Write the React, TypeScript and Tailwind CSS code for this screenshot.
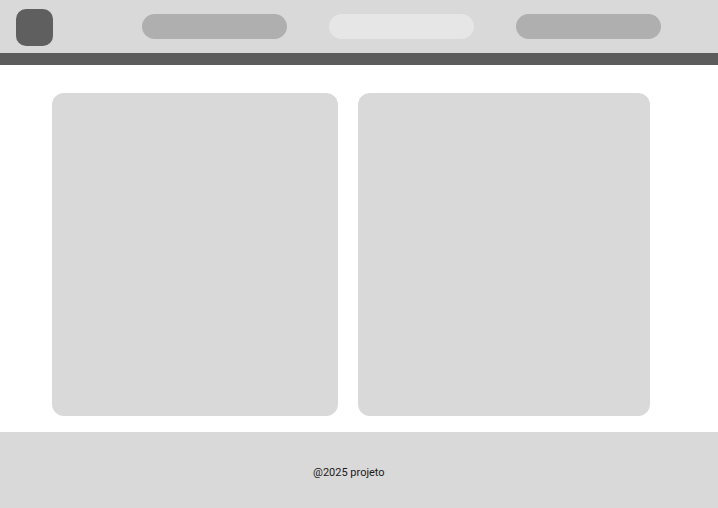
import React from "react";

export default function App() {
  return (
    <div className="w-[718px] h-[508px] flex flex-col bg-white" style={{ fontFamily: "Roboto, 'Liberation Sans', sans-serif" }}>
      <header className="h-[53px] bg-[#d9d9d9] flex items-center pl-[16px] shrink-0">
        <div className="w-[37px] h-[37px] rounded-[10px] bg-[#5f5f5f] mt-[1px]" />
        <nav className="flex items-center gap-[42px] ml-[89px]">
          <div className="w-[145px] h-[25px] rounded-full bg-[#afafaf]" />
          <div className="w-[145px] h-[25px] rounded-full bg-[#e6e6e6]" />
          <div className="w-[145px] h-[25px] rounded-full bg-[#afafaf]" />
        </nav>
      </header>
      <div className="h-[12px] bg-[#5c5c5c] shrink-0" />
      <main className="flex-1 flex gap-[20px] pl-[52px] pt-[28px] pb-[16px]">
        <div className="w-[286px] h-[323px] rounded-[12px] bg-[#d9d9d9]" />
        <div className="w-[292px] h-[323px] rounded-[12px] bg-[#d9d9d9]" />
      </main>
      <footer className="h-[76px] bg-[#d9d9d9] flex items-center pl-[313px] shrink-0">
        <span className="text-[11px] text-[#1a1a1a] leading-none mt-[4px]">@2025 projeto</span>
      </footer>
    </div>
  );
}
